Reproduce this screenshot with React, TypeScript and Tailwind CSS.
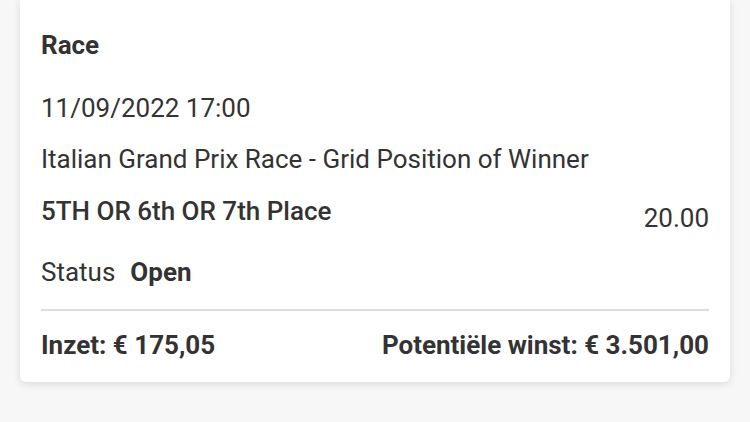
export default function App() {
  return (
    <div className="min-h-screen bg-[#f7f7f7] px-5 pb-10" style={{ fontFamily: 'Roboto, "Noto Sans", sans-serif' }}>
      <div className="rounded-b-md bg-white px-[21px] pt-[29px] pb-[21px] text-[#333333] shadow-[0_2px_8px_rgba(0,0,0,0.12)]">
        <div className="text-[26px] font-bold leading-[32px]">Race</div>
        <div className="mt-[31px] text-[26px] leading-[32px]">11/09/2022 17:00</div>
        <div className="mt-[19px] text-[26px] leading-[32px]">Italian Grand Prix Race - Grid Position of Winner</div>
        <div className="mt-[20px] flex items-start justify-between">
          <div className="text-[26px] font-medium leading-[32px]">5TH OR 6th OR 7th Place</div>
          <div className="mt-[7px] text-[26px] leading-[32px]">20.00</div>
        </div>
        <div className="mt-[22px] flex items-baseline gap-[15px] text-[26px] leading-[32px]">
          <span>Status</span>
          <span className="font-bold">Open</span>
        </div>
        <div className="mt-[21px] h-[2px] bg-[#dddddd]" />
        <div className="mt-[18px] flex justify-between text-[26px] font-bold leading-[32px]">
          <span>Inzet: € 175,05</span>
          <span>Potentiële winst: € 3.501,00</span>
        </div>
      </div>
    </div>
  );
}
